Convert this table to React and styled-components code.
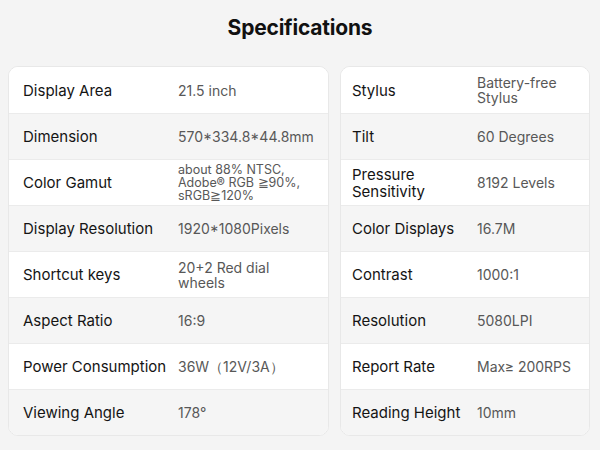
import React from 'react'
import styled, { createGlobalStyle, css } from 'styled-components'

const GlobalStyle = createGlobalStyle`
    html, body {
        margin:0;
        padding:0;
        background:#f4f4f4;
    }
    body {
        font-family:'Inter', 'Noto Sans', sans-serif;
    }
`

const PageStyle = styled.div`
    width:600px;
    height:450px;
    overflow:hidden;
    background:#f4f4f4;
    display:flex;
    flex-direction:column;
`

const TitleStyle = styled.h1`
    margin:0;
    height:66px;
    padding-bottom:12px;
    box-sizing:border-box;
    display:flex;
    align-items:center;
    justify-content:center;
    font-size:21px;
    font-weight:700;
    color:#111;
    letter-spacing:-0.2px;
`

const CardsStyle = styled.div`
    display:grid;
    grid-template-columns:321px 250px;
    column-gap:11px;
    padding-left:8px;
`

const CardStyle = styled.div`
    background:#fff;
    border:1px solid #e8e8e8;
    border-radius:10px;
    overflow:hidden;
`

const RowStyle = styled.div`
    height:46px;
    box-sizing:border-box;
    display:grid;
    grid-template-columns:${props => props.labelWidth}px 1fr;
    align-items:center;
    padding-left:${props => props.pad}px;
    background:#fff;
    border-top:1px solid #ebebeb;
    &:first-child {
        border-top:none;
    }
    ${props => props.shaded && css`
        background:#f5f5f5;
    `}
`

const LabelStyle = styled.div`
    font-size:15px;
    line-height:17px;
    color:#141414;
    white-space:pre-line;
`

const ValueStyle = styled.div`
    font-size:14px;
    line-height:15px;
    color:#585858;
    white-space:pre-line;
    ${props => props.small && css`
        font-size:12.5px;
        line-height:13px;
    `}
`

const leftSpecs = [
    ['Display Area', '21.5 inch'],
    ['Dimension', '570*334.8*44.8mm'],
    ['Color Gamut', 'about 88% NTSC,\nAdobe® RGB ≧90%,\nsRGB≧120%', true],
    ['Display Resolution', '1920*1080Pixels'],
    ['Shortcut keys', '20+2 Red dial\nwheels'],
    ['Aspect Ratio', '16:9'],
    ['Power Consumption', '36W（12V/3A）'],
    ['Viewing Angle', '178°'],
]

const rightSpecs = [
    ['Stylus', 'Battery-free\nStylus'],
    ['Tilt', '60 Degrees'],
    ['Pressure\nSensitivity', '8192 Levels'],
    ['Color Displays', '16.7M'],
    ['Contrast', '1000:1'],
    ['Resolution', '5080LPI'],
    ['Report Rate', 'Max≥ 200RPS'],
    ['Reading Height', '10mm'],
]

const SpecCard = ({ specs, labelWidth, pad }) => (
    <CardStyle>
        {specs.map(([label, value, small], i) => (
            <RowStyle key={label} shaded={i % 2 === 1} labelWidth={labelWidth} pad={pad}>
                <LabelStyle>{label}</LabelStyle>
                <ValueStyle small={small}>{value}</ValueStyle>
            </RowStyle>
        ))}
    </CardStyle>
)

const App = () => (
    <PageStyle>
        <GlobalStyle />
        <TitleStyle>Specifications</TitleStyle>
        <CardsStyle>
            <SpecCard specs={leftSpecs} labelWidth={155} pad={14} />
            <SpecCard specs={rightSpecs} labelWidth={125} pad={11} />
        </CardsStyle>
    </PageStyle>
)

export default App
